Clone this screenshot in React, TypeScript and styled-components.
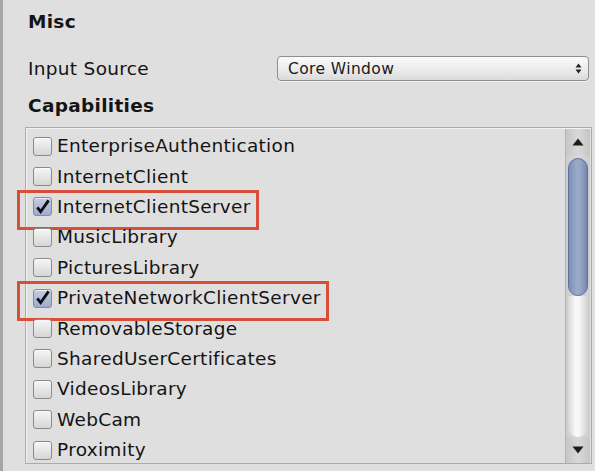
import React from 'react';
import styled, { createGlobalStyle, css } from 'styled-components';

const GlobalStyle = createGlobalStyle`
  html, body {
    margin: 0;
    padding: 0;
    overflow: hidden;
    background: #dfdfdf;
  }
`;

interface Capability {
  name: string;
  checked?: boolean;
  marked?: boolean;
}

const capabilities: Capability[] = [
  { name: 'EnterpriseAuthentication' },
  { name: 'InternetClient' },
  { name: 'InternetClientServer', checked: true, marked: true },
  { name: 'MusicLibrary' },
  { name: 'PicturesLibrary' },
  { name: 'PrivateNetworkClientServer', checked: true, marked: true },
  { name: 'RemovableStorage' },
  { name: 'SharedUserCertificates' },
  { name: 'VideosLibrary' },
  { name: 'WebCam' },
  { name: 'Proximity' },
];

const App: React.FC = () => {
  return (
    <>
      <GlobalStyle />
      <Panel>
        <Heading>Misc</Heading>
        <FieldRow>
          <FieldLabel>Input Source</FieldLabel>
          <Popup>
            <span>Core Window</span>
            <Stepper>
              <svg width="7" height="11" viewBox="0 0 7 11">
                <path d="M3.5 0.5 L6.5 4.5 L0.5 4.5 Z" fill="#222" />
                <path d="M3.5 10.5 L6.5 6.5 L0.5 6.5 Z" fill="#222" />
              </svg>
            </Stepper>
          </Popup>
        </FieldRow>
        <SubHeading>Capabilities</SubHeading>
        <ListBox>
          <Items>
            {capabilities.map((c) => (
              <Row key={c.name}>
                <Item $marked={!!c.marked}>
                  <Box $checked={!!c.checked}>
                    {c.checked && (
                      <svg width="18" height="18" viewBox="0 0 18 18">
                        <path
                          d="M3.5 9.5 L7 14 L15.5 2"
                          stroke="#0d0d14"
                          strokeWidth="3"
                          fill="none"
                          strokeLinejoin="miter"
                        />
                      </svg>
                    )}
                  </Box>
                  <Name>{c.name}</Name>
                </Item>
              </Row>
            ))}
          </Items>
          <ScrollBar>
            <ArrowButton>
              <svg width="12" height="8" viewBox="0 0 12 8">
                <path d="M6 0.5 L11.5 7.5 L0.5 7.5 Z" fill="#1c1c1c" />
              </svg>
            </ArrowButton>
            <Track>
              <Thumb />
              <Rail />
            </Track>
            <ArrowButton>
              <svg width="12" height="8" viewBox="0 0 12 8">
                <path d="M6 7.5 L11.5 0.5 L0.5 0.5 Z" fill="#1c1c1c" />
              </svg>
            </ArrowButton>
          </ScrollBar>
        </ListBox>
      </Panel>
    </>
  );
};

export default App;

const Panel = styled.div`
  width: 595px;
  height: 471px;
  box-sizing: border-box;
  border-left: 3px solid #a6a6a6;
  padding-left: 22px;
  display: flex;
  flex-direction: column;
  font-family: 'DejaVu Sans', Verdana, sans-serif;
  color: #141414;
  background: #dfdfdf;
`;

const Heading = styled.div`
  font-size: 18.5px;
  font-weight: 700;
  line-height: 44px;
  padding-left: 3px;
  letter-spacing: 0.3px;
`;

const FieldRow = styled.div`
  display: flex;
  align-items: center;
  margin-top: 12px;
  height: 25px;
  padding-left: 3px;
`;

const FieldLabel = styled.div`
  width: 249px;
  font-size: 18.5px;
  letter-spacing: 0.3px;
`;

const Popup = styled.div`
  width: 312px;
  height: 25px;
  box-sizing: border-box;
  display: flex;
  align-items: center;
  justify-content: space-between;
  padding: 0 6px 0 10px;
  border: 1px solid #8e8e8e;
  border-radius: 4px;
  background: linear-gradient(#fbfbfb, #ececec 55%, #dadada);
  box-shadow: 0 1px 0 rgba(255, 255, 255, 0.6);
  font-size: 15.5px;
  letter-spacing: 0.4px;
  color: #1a1a1a;
`;

const Stepper = styled.div`
  display: flex;
  align-items: center;
`;

const SubHeading = styled.div`
  font-size: 18.5px;
  font-weight: 700;
  line-height: 24px;
  margin-top: 13px;
  padding-left: 3px;
  letter-spacing: 0.3px;
`;

const ListBox = styled.div`
  margin-top: 9px;
  width: 567px;
  height: 337px;
  box-sizing: border-box;
  border: 1px solid #ababab;
  box-shadow: inset 1px 1px 0 #f3f3f3;
  display: flex;
  padding: 1px 1px 0 0;
`;

const Items = styled.div`
  flex: 1;
  padding: 2px 0 0 7px;
`;

const Row = styled.div`
  height: 30.4px;
  display: flex;
  align-items: center;
`;

const marker = css`
  &::after {
    content: '';
    position: absolute;
    left: -16px;
    right: -8px;
    top: -6px;
    bottom: -12px;
    border: 3px solid #d64f36;
  }
`;

const Item = styled.div<{ $marked: boolean }>`
  position: relative;
  display: inline-flex;
  align-items: center;
  gap: 5px;
  ${(p) => p.$marked && marker}
`;

const Box = styled.div<{ $checked: boolean }>`
  width: 19px;
  height: 19px;
  box-sizing: border-box;
  border: 1px solid #8a8a8a;
  border-radius: 3px;
  display: flex;
  align-items: center;
  justify-content: center;
  background: ${(p) =>
    p.$checked
      ? 'linear-gradient(#c3cde0, #9dadcc)'
      : 'linear-gradient(#f6f6f6, #d6d6d6)'};
  box-shadow: inset 0 1px 0 rgba(255, 255, 255, 0.7);
`;

const Name = styled.span`
  font-size: 18.5px;
  line-height: 22px;
  letter-spacing: 0.3px;
`;

const ScrollBar = styled.div`
  width: 24px;
  border-left: 1px solid #b4b4b4;
  display: flex;
  flex-direction: column;
  background: #d2d2d2;
`;

const ArrowButton = styled.div`
  height: 26px;
  display: flex;
  align-items: center;
  justify-content: center;
  background: linear-gradient(90deg, #c6c6c6, #d8d8d8 50%, #c6c6c6);
`;

const Track = styled.div`
  flex: 1;
  display: flex;
  flex-direction: column;
  padding: 3px 2px 0;
  background: linear-gradient(90deg, #cdcdcd, #d9d9d9 50%, #cdcdcd);
`;

const Thumb = styled.div`
  height: 138px;
  box-sizing: border-box;
  border: 1px solid #5e7299;
  border-radius: 10px;
  background: linear-gradient(90deg, #7c91b7, #9aabc9 45%, #90a2c3 70%, #7387ae);
`;

const Rail = styled.div`
  flex: 1;
  border-radius: 0 0 10px 10px;
  background: linear-gradient(90deg, #d6d6d6, #fbfbfb 40%, #f4f4f4 60%, #d0d0d0);
`;
